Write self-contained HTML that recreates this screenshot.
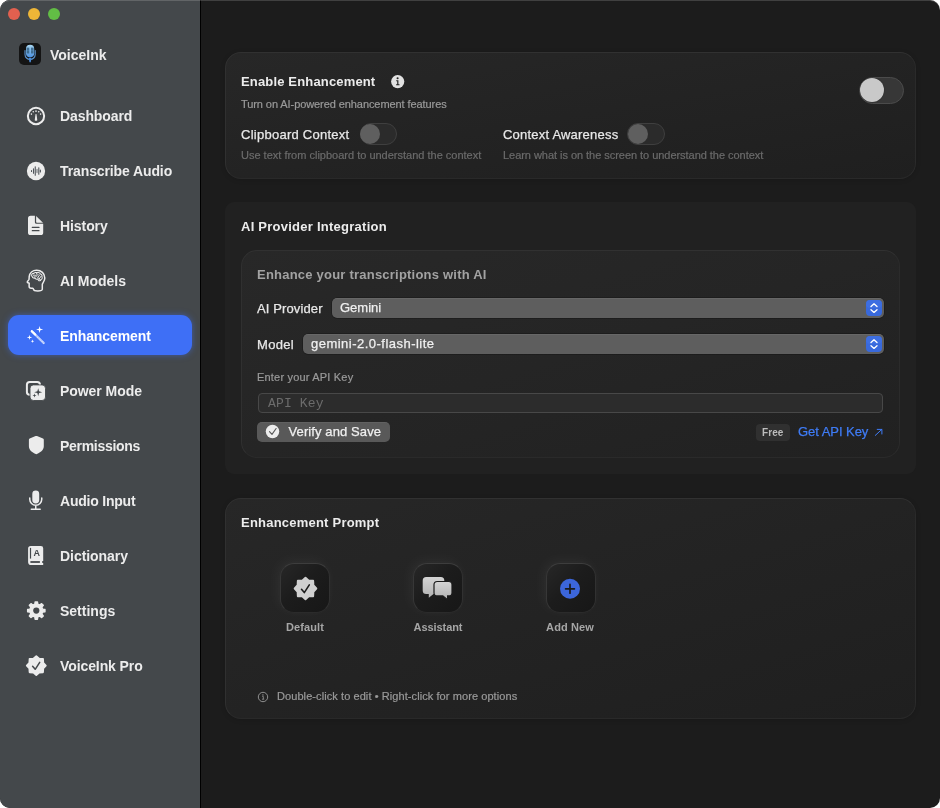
<!DOCTYPE html>
<html lang="en">
<head>
<meta charset="utf-8">
<title>VoiceInk</title>
<style>
*{box-sizing:border-box;margin:0;padding:0}
html,body{width:940px;height:808px;background:#fff;overflow:hidden}
body{font-family:"Liberation Sans",sans-serif;color:#e6e6e6;-webkit-font-smoothing:antialiased}
#win{will-change:transform;position:absolute;left:0;top:0;width:940px;height:808px;border-radius:10px;overflow:hidden;background:#1c1c1c}
#win:after{content:"";position:absolute;left:0;top:0;right:0;bottom:0;border-radius:10px;box-shadow:inset 0 1px 0 rgba(255,255,255,.16);pointer-events:none}
#side{position:absolute;left:0;top:0;width:200px;height:808px;background:#44484b}
#sep{position:absolute;left:200px;top:0;width:1px;height:808px;background:#000}
.tl{position:absolute;top:8px;width:12px;height:12px;border-radius:50%}
.abs{position:absolute;white-space:nowrap}
.nav{position:absolute;left:60px;font-weight:bold;font-size:14px;line-height:20px;color:#ececec;white-space:nowrap;letter-spacing:0}
.ico{position:absolute;left:24px;width:24px;height:24px}
#pill{position:absolute;left:8px;top:315px;width:184px;height:40px;border-radius:11px;background:#3e6ff6;box-shadow:0 0 6px rgba(62,111,246,.55)}
.card{position:absolute;left:225px;width:691px;background:linear-gradient(to bottom right,#272727 0%,#232323 50%,#1f1f1f 100%);border:1px solid;border-color:#313131 #2a2a2a #292929 #303030;border-radius:16px;box-shadow:0 1px 5px rgba(0,0,0,.14)}
.h{font-weight:bold;font-size:13px;color:#ececec;letter-spacing:-0.1px}
.sub{font-size:11px;color:#9a9a9a;-webkit-text-stroke:.2px}
.dim{font-size:11px;color:#6b6b6b;-webkit-text-stroke:.2px}
.lbl{font-size:13px;color:#e8e8e8;-webkit-text-stroke:.25px}
.tog{position:absolute;border-radius:20px;background:#3a3a3a;border:1px solid #4a4a4a}
.tog i{position:absolute;border-radius:50%}
.sel{position:absolute;height:20px;border-radius:5px;background:#5e5e5e;box-shadow:0 0 0 .5px rgba(0,0,0,.4),inset 0 .5px 0 rgba(255,255,255,.12)}
.sel span{position:absolute;left:8px;top:0;font-size:13px;line-height:19px;color:#f0f0f0;-webkit-text-stroke:.25px}
.sel svg{position:absolute;right:2px;top:2px}
.tile{position:absolute;top:563px;width:50px;height:50px;border-radius:14px;background:linear-gradient(135deg,#272727 0%,#1c1c1c 45%,#171717 100%);border:1px solid;border-color:#3d3d3d #313131 #2b2b2b #373737;box-shadow:-3px -3px 14px rgba(255,255,255,.045),0 0 8px rgba(255,255,255,.025)}
.tlab{position:absolute;top:621px;width:100px;text-align:center;font-size:11px;font-weight:bold;color:#a6a6a6;letter-spacing:.1px}
</style>
</head>
<body>
<div id="win">
  <div id="side"></div>
  <div id="sep"></div>
  <div class="tl" style="left:8px;background:#e2604f"></div>
  <div class="tl" style="left:28px;background:#eeb637"></div>
  <div class="tl" style="left:48px;background:#62bd45"></div>

  <!-- app logo -->
  <div class="abs" style="left:19px;top:43px;width:22px;height:22px;border-radius:5px;background:#141414"></div>
  <svg class="abs" style="left:19px;top:43px" width="22" height="22" viewBox="0 0 22 22">
    <defs><linearGradient id="mg" x1="0" y1="0" x2="0" y2="1"><stop offset="0" stop-color="#a9d6ef"/><stop offset=".45" stop-color="#79b3e6"/><stop offset="1" stop-color="#4f93e0"/></linearGradient></defs>
    <path d="M6 7.600V11.400A5.100 5.100 0 0 0 16.200 11.400V7.600" fill="none" stroke="#5a93cf" stroke-width="1.1" stroke-linecap="round"/>
    <rect x="7" y="1.800" width="8.200" height="12.500" rx="4.100" fill="url(#mg)"/>
    <rect x="7.700" y="4.700" width="2.500" height="5.700" fill="#2c5473" opacity=".85"/>
    <rect x="12" y="4.700" width="2.500" height="5.700" fill="#2c5473" opacity=".85"/>
    <path d="M7.700 6h2.500M7.700 7.500h2.500M7.700 9h2.500M12 6h2.500M12 7.500h2.500M12 9h2.500" stroke="#6fa8d6" stroke-width=".5" opacity=".7"/>
    <path d="M9.700 14.800h2.800l-.7 4.300q-.7.700-1.400 0z" fill="#4a8ad6"/>
  </svg>
  <div class="nav" style="left:50px;top:45px;letter-spacing:0px">VoiceInk</div>

  <div id="pill"></div>

  <div class="nav" style="top:106px;letter-spacing:-0.09px">Dashboard</div>
  <div class="nav" style="top:161px;letter-spacing:-0.11px">Transcribe Audio</div>
  <div class="nav" style="top:216px;letter-spacing:-0.08px">History</div>
  <div class="nav" style="top:271px;letter-spacing:-0.02px">AI Models</div>
  <div class="nav" style="top:326px;color:#fff;letter-spacing:-0.1px">Enhancement</div>
  <div class="nav" style="top:381px;letter-spacing:-0.06px">Power Mode</div>
  <div class="nav" style="top:436px;letter-spacing:-0.3px">Permissions</div>
  <div class="nav" style="top:491px;letter-spacing:-0.22px">Audio Input</div>
  <div class="nav" style="top:546px;letter-spacing:-0.05px">Dictionary</div>
  <div class="nav" style="top:601px;letter-spacing:0px">Settings</div>
  <div class="nav" style="top:656px;letter-spacing:-0.09px">VoiceInk Pro</div>


  <!-- Dashboard: gauge -->
  <svg class="ico" style="top:104px" viewBox="0 0 24 24"><g fill="#ececec">
    <circle cx="12" cy="12" r="8.15" fill="none" stroke="#ececec" stroke-width="2"/>
    <path d="M11.55 9.9h.9l.85 6.3q-1.3 1.2-2.6 0z"/>
    <circle cx="12" cy="7.1" r=".85"/><circle cx="14.7" cy="7.8" r=".8"/><circle cx="9.3" cy="7.8" r=".8"/>
    <circle cx="16.6" cy="10.1" r=".8"/><circle cx="7.4" cy="10.1" r=".8"/></g></svg>
  <!-- Transcribe: waveform circle -->
  <svg class="ico" style="top:159px" viewBox="0 0 24 24">
    <circle cx="12" cy="12" r="9.15" fill="#ececec"/>
    <g stroke="#50555a" stroke-width="1.1" stroke-linecap="round">
    <path d="M7.5 11.6v.8M9.5 9.7v4.6M11.25 7.8v8.4M14.8 8.8v6.4M16.4 11v2"/><path d="M13 10.5v3" stroke="#8b8f92" stroke-width="1.4"/></g></svg>
  <!-- History: doc.text.fill -->
  <svg class="ico" style="top:214px" viewBox="0 0 24 24"><g fill="#ececec">
    <path d="M6.6 1.7H10.9V8.2Q10.9 9.8 12.5 9.8H19.2V18.5Q19.2 21.1 16.6 21.1H6.6Q4 21.1 4 18.5V4.3Q4 1.7 6.6 1.7Z"/>
    <path d="M12.1 1.9L19 8.7H13Q12.1 8.7 12.1 7.8Z"/></g>
    <path d="M8.300 13.400h6.700M8.300 16.700h6.700" stroke="#44484b" stroke-width="1.200" stroke-linecap="round"/></svg>
  <!-- AI Models: brain head -->
  <svg class="ico" style="top:269px" viewBox="0 0 24 24"><g fill="none" stroke="#ececec" stroke-linecap="round" stroke-linejoin="round">
    <path stroke-width="1.5" d="M12.6 1.3C8.6 1.3 5.6 4 5.2 7.6C5.1 8.9 5.2 9.9 4.9 10.6L3.4 12.6C3.1 13.1 3.4 13.6 4 13.8L5.2 14.3L5.1 17.2C5.1 18.5 5.9 19.2 7.1 19.2H8.6C9.2 19.2 9.4 19.6 9.5 20.3C9.7 21.4 11.5 21.9 13.8 21.9C16.2 21.9 18.2 21.4 18.3 20.3V15.5C18.3 14 20.8 12.6 20.8 9C20.8 4.4 17.2 1.3 12.6 1.3Z"/>
    <path stroke-width="1.05" d="M7.6 6.6C7.4 5.2 8.6 4.3 9.8 4.4C10.4 3.4 12 3.1 13 3.8C14.3 3.2 15.9 3.7 16.4 4.9C17.7 5.2 18.4 6.5 17.9 7.7C18.6 8.7 18.2 10.2 17 10.5C16.7 11.7 15.3 12.1 14.4 11.3L13.9 9.9C12.6 10.4 11.3 10 10.8 9.1C9.5 9.3 8.4 8.7 8.4 7.7C7.9 7.5 7.6 7.1 7.6 6.6Z"/>
    <path stroke-width=".95" d="M12.7 3.6V5.2M9.4 6.2H11.6L12.6 7.4M13.6 8.9L15.6 5.9M15.2 9.9L17 7.3M10 8L11.5 7.9M14.1 5.4L12.9 6.6M16.1 10.6L14.6 9.4"/></g></svg>
  <!-- Enhancement: wand.and.stars -->
  <svg class="ico" style="top:324px" viewBox="0 0 24 24"><g fill="#fff">
    <path d="M15.60 1.90L16.36 4.74L19.20 5.50L16.36 6.26L15.60 9.10L14.84 6.26L12.00 5.50L14.84 4.74Z"/>
    <path d="M5.50 10.70L6.07 12.83L8.20 13.40L6.07 13.97L5.50 16.10L4.93 13.97L2.80 13.40L4.93 12.83Z"/>
    <path d="M8.50 15.50L8.93 16.77L10.20 17.20L8.93 17.63L8.50 18.90L8.07 17.63L6.80 17.20L8.07 16.77Z"/></g>
    <path d="M7.800 7.200L19.700 19.100" stroke="#fff" stroke-opacity=".78" stroke-width="2.1" stroke-linecap="round"/>
    <path d="M7.800 7.200L11.200 10.600" stroke="#fff" stroke-width="2.100" stroke-linecap="round"/>
    <path d="M11.900 11.300L19.300 18.700" stroke="#3e6ff6" stroke-opacity=".6" stroke-width=".8" stroke-dasharray=".9 .7"/></svg>
  <!-- Power Mode -->
  <svg class="ico" style="top:379px" viewBox="0 0 24 24">
    <rect x="2.900" y="2.900" width="13.100" height="12.900" rx="2.800" fill="none" stroke="#ececec" stroke-width="2"/>
    <rect x="6" y="5.900" width="15.500" height="15.600" rx="3.400" fill="#ececec" stroke="#44484b" stroke-width=".9"/>
    <g fill="#44484b"><path d="M14.20 9.20L15.05 12.35L18.20 13.20L15.05 14.05L14.20 17.20L13.35 14.05L10.20 13.20L13.35 12.35Z"/>
    <path d="M10.50 14.60L11.01 16.09L12.50 16.60L11.01 17.11L10.50 18.60L9.99 17.11L8.50 16.60L9.99 16.09Z"/></g></svg>
  <!-- Permissions: shield -->
  <svg class="ico" style="top:434px" viewBox="0 0 24 24">
    <path fill="#ececec" d="M11.6 2.1Q12.3 1.8 13 2.1L19 4.5Q19.8 4.8 19.8 5.7V12.3C19.8 16.3 15.8 18.8 12.9 20.1Q12.3 20.4 11.7 20.1C8.8 18.8 4.9 16.3 4.9 12.3V5.7Q4.9 4.8 5.7 4.5Z"/></svg>
  <!-- Audio Input: mic -->
  <svg class="ico" style="top:489px" viewBox="0 0 24 24">
    <rect x="8.3" y="1.5" width="6.9" height="12.9" rx="3.45" fill="#ececec"/>
    <path d="M5.75 9V10.2A6 6 0 0 0 17.75 10.2V9M11.75 16.2V20.2M7.3 20.2H16.2" fill="none" stroke="#ececec" stroke-width="1.5" stroke-linecap="round"/></svg>
  <!-- Dictionary: book -->
  <svg class="ico" style="top:544px" viewBox="0 0 24 24">
    <path fill="#ececec" d="M6.7 1.9H16.9Q19.2 1.9 19.2 4.2V16.9H18.4Q17.8 17.9 18.4 18.9H19.2V21.1H7.2Q4.1 21.1 4.1 18V4.5Q4.1 1.9 6.7 1.9Z"/>
    <path d="M6.500 3.900V14.600" stroke="#44484b" stroke-width="1.200"/>
    <path d="M6.400 17.100H15.900V18.900H6.400Z" fill="#44484b"/>
    <text x="12.850" y="12.200" text-anchor="middle" font-family="Liberation Sans, sans-serif" font-size="9" font-weight="bold" fill="#44484b">A</text></svg>
  <!-- Settings: gear -->
  <svg class="ico" style="top:599px" viewBox="0 0 24 24">
    <path fill="#ececec" stroke="#ececec" stroke-width="1.400" stroke-linejoin="round" d="M10.83 5.27L11.14 2.93L13.46 2.93L13.77 5.27L15.74 6.08L17.61 4.64L19.26 6.29L17.82 8.16L18.63 10.13L20.97 10.44L20.97 12.76L18.63 13.07L17.82 15.04L19.26 16.91L17.61 18.56L15.74 17.12L13.77 17.93L13.46 20.27L11.14 20.27L10.83 17.93L8.86 17.12L6.99 18.56L5.34 16.91L6.78 15.04L5.97 13.07L3.63 12.76L3.63 10.44L5.97 10.13L6.78 8.16L5.34 6.29L6.99 4.64L8.86 6.08Z"/>
    <circle cx="12.300" cy="11.600" r="3.100" fill="#44484b"/></svg>
  <!-- VoiceInk Pro: seal -->
  <svg class="ico" style="top:654px" viewBox="0 0 24 24">
    <path fill="#ececec" stroke="#ececec" stroke-width="1.800" stroke-linejoin="round" d="M12.30 2.10L15.17 4.67L19.02 4.88L19.23 8.73L21.80 11.60L19.23 14.47L19.02 18.32L15.17 18.53L12.30 21.10L9.43 18.53L5.58 18.32L5.37 14.47L2.80 11.60L5.37 8.73L5.58 4.88L9.43 4.67Z"/>
    <path d="M8.600 12.200L11.200 15.300L15.700 8.400" fill="none" stroke="#44484b" stroke-width="1.500" stroke-linecap="round" stroke-linejoin="round"/></svg>

  <!-- CARD 1 -->
  <div class="card" style="top:52px;height:127px"></div>
  <div class="abs h" style="left:241px;top:74px;letter-spacing:0.16px">Enable Enhancement</div>
  <div class="abs sub" style="left:241px;top:98px;letter-spacing:-0.08px">Turn on AI-powered enhancement features</div>
  <div class="abs lbl" style="left:241px;top:127px;letter-spacing:0.26px">Clipboard Context</div>
  <div class="abs dim" style="left:241px;top:149px;letter-spacing:0px">Use text from clipboard to understand the context</div>
  <div class="abs lbl" style="left:503px;top:127px;letter-spacing:0.21px">Context Awareness</div>
  <div class="abs dim" style="left:503px;top:149px;letter-spacing:-0.04px">Learn what is on the screen to understand the context</div>

  <svg class="abs" style="left:390px;top:74px" width="16" height="16" viewBox="0 0 16 16"><circle cx="7.700" cy="7.600" r="6.600" fill="#e2e2e2"/>
    <circle cx="7.600" cy="4.300" r="1.050" fill="#232323"/><path d="M6.200 6.300h2.200v4h1.100v1H6.100v-1h1.100V7.300H6.200z" fill="#232323"/></svg>
  <div class="tog" style="left:858.5px;top:76.5px;width:45.5px;height:27.5px;background:#373737;border-color:#4b4b4b"><i style="left:.3px;top:.8px;width:24px;height:24px;background:#c9c9c9;box-shadow:0 0 1px rgba(0,0,0,.5)"></i></div>
  <div class="tog" style="left:359.5px;top:123px;width:37.5px;height:22px;background:#2b2b2b;border-color:#3f3f3f"><i style="left:-.5px;top:0;width:20px;height:20px;background:#5f5f5f"></i></div>
  <div class="tog" style="left:627px;top:123px;width:37.5px;height:22px;background:#2b2b2b;border-color:#3f3f3f"><i style="left:-.5px;top:0;width:20px;height:20px;background:#5f5f5f"></i></div>

  <!-- CARD 2 -->
  <div class="card" style="top:202px;height:272px;border:none;border-radius:9px;box-shadow:none;background:#212121"></div>
  <div class="abs h" style="left:241px;top:219px;letter-spacing:0.25px">AI Provider Integration</div>
  <div class="card" style="left:241px;top:250px;width:659px;height:208px;background:linear-gradient(to bottom right,#282828 0%,#252525 50%,#212121 100%);border-color:#313131 #2b2b2b #2a2a2a #303030;box-shadow:none"></div>
  <div class="abs h" style="left:257px;top:267px;color:#a2a2a2;letter-spacing:0.22px">Enhance your transcriptions with AI</div>
  <div class="abs lbl" style="left:257px;top:301px;letter-spacing:0.12px">AI Provider</div>
  <div class="abs lbl" style="left:257px;top:337px;letter-spacing:0.3px">Model</div>
  <div class="abs sub" style="left:257px;top:371px;letter-spacing:0.19px">Enter your API Key</div>

  <div class="sel" style="left:332px;top:298px;width:552px"><span>Gemini</span><svg width="16" height="16" viewBox="0 0 16 16"><rect width="16" height="16" rx="4" fill="#3869dc"/><rect width="16" height="8" rx="4" fill="#4172e4" opacity=".6"/><path d="M5 6.500L8 3.800l3 2.700M5 9.700L8 12.400l3-2.700" fill="none" stroke="#fff" stroke-width="1.350" stroke-linecap="round" stroke-linejoin="round"/></svg></div>
  <div class="sel" style="left:303px;top:334px;width:581px"><span style="letter-spacing:.48px">gemini-2.0-flash-lite</span><svg width="16" height="16" viewBox="0 0 16 16"><rect width="16" height="16" rx="4" fill="#3869dc"/><rect width="16" height="8" rx="4" fill="#4172e4" opacity=".6"/><path d="M5 6.500L8 3.800l3 2.700M5 9.700L8 12.400l3-2.700" fill="none" stroke="#fff" stroke-width="1.350" stroke-linecap="round" stroke-linejoin="round"/></svg></div>
  <div class="abs" style="left:258px;top:393px;width:625px;height:20px;border-radius:4px;background:#2c2c2c;border:1px solid #484848"></div>
  <div class="abs" style="left:268px;top:396px;font-family:'Liberation Mono',monospace;font-size:13px;line-height:16px;color:#6c6c6c;letter-spacing:0.15px">API Key</div>
  <div class="abs" style="left:257px;top:422px;width:133px;height:20px;border-radius:5px;background:#595959;box-shadow:inset 0 .5px 0 rgba(255,255,255,.1)"></div>
  <svg class="abs" style="left:265px;top:424px" width="15" height="15" viewBox="0 0 15 15"><circle cx="7.500" cy="7.400" r="6.750" fill="#ececec"/><path d="M4.500 7.700l2.500 2.600 4.100-5.800" fill="none" stroke="#595959" stroke-width="1.150" stroke-linecap="round" stroke-linejoin="round"/></svg>
  <div class="abs lbl" style="left:288.5px;top:424px;color:#f0f0f0;letter-spacing:0.1px">Verify and Save</div>
  <div class="abs" style="left:756px;top:424px;width:34px;height:17px;border-radius:4px;background:#303030"></div>
  <div class="abs" style="left:762px;top:427px;font-size:10px;font-weight:bold;color:#bcbcbc;letter-spacing:.1px">Free</div>
  <div class="abs lbl" style="left:798px;top:424px;color:#3f7cf6;letter-spacing:-0.05px">Get API Key</div>
  <svg class="abs" style="left:873px;top:426px" width="11" height="11" viewBox="0 0 11 11"><path d="M2.300 9.400L8.800 3.400M4.200 3.400H8.900V8" fill="none" stroke="#3f7cf6" stroke-width="1" stroke-linecap="round" stroke-linejoin="round"/></svg>

  <!-- CARD 3 -->
  <div class="card" style="top:498px;height:221px"></div>
  <div class="abs h" style="left:241px;top:515px;letter-spacing:0.22px">Enhancement Prompt</div>
  <div class="abs sub" style="left:277px;top:690px;letter-spacing:0.08px">Double-click to edit • Right-click for more options</div>
  <div class="tile" style="left:280px"></div>
  <div class="tile" style="left:413px"></div>
  <div class="tile" style="left:546px"></div>
  <svg class="abs" style="left:293px;top:576px" width="25" height="25" viewBox="-12.5 -12.5 25 25">
    <path fill="#d0d0d0" stroke="#d0d0d0" stroke-width="2" stroke-linejoin="round" d="M0.00 -10.80L3.25 -7.85L7.64 -7.64L7.85 -3.25L10.80 0.00L7.85 3.25L7.64 7.64L3.25 7.85L0.00 10.80L-3.25 7.85L-7.64 7.64L-7.85 3.25L-10.80 0.00L-7.85 -3.25L-7.64 -7.64L-3.25 -7.85Z"/>
    <path d="M-4 .8L-1.2 4.1L3.8 -3.6" fill="none" stroke="#1c1c1c" stroke-width="1.6" stroke-linecap="round" stroke-linejoin="round"/></svg>
  <svg class="abs" style="left:413px;top:563px" width="50" height="50" viewBox="0 0 50 50"><defs><linearGradient id="bg1" x1="0" y1="0" x2="0" y2="1"><stop offset="0" stop-color="#d4d4d4"/><stop offset="1" stop-color="#b2b2b2"/></linearGradient></defs>
    <path fill="url(#bg1)" d="M13.2 14h14.6q3.5 0 3.5 3.5v10q0 3.5-3.500 3.500H20.500L15.800 34.800V31H13.200Q9.700 31 9.700 27.500V17.500Q9.700 14 13.200 14Z"/>
    <path fill="url(#bg1)" stroke="#1c1c1c" stroke-width="1.200" d="M24.200 18.500H35.800q3.200 0 3.200 3.200v8q0 3.200-3.200 3.200H34.600V36.700L29.800 32.900H24.200q-3.200 0-3.200-3.200v-8q0-3.200 3.200-3.200Z"/></svg>
  <svg class="abs" style="left:559px;top:578px" width="22" height="22" viewBox="0 0 22 22"><circle cx="11" cy="10.8" r="10" fill="#3c66db"/><path d="M6.600 10.800h8.800M11 6.400v8.800" stroke="#1a1a1a" stroke-width="1.7" stroke-linecap="round"/></svg>
  <div class="tlab" style="left:255px;letter-spacing:0.1px;top:621px">Default</div>
  <div class="tlab" style="left:388px;letter-spacing:-0.07px;top:621px">Assistant</div>
  <div class="tlab" style="left:520px;letter-spacing:0.1px;top:621px">Add New</div>
  <svg class="abs" style="left:256px;top:690px" width="14" height="14" viewBox="0 0 14 14"><circle cx="7" cy="7" r="4.700" fill="none" stroke="#9a9a9a" stroke-width=".9"/><circle cx="6.900" cy="4.900" r=".7" fill="#9a9a9a"/><path d="M6.200 6.400h1.100v2.700M6 9.200h2.200" fill="none" stroke="#9a9a9a" stroke-width=".8"/></svg>
</div>
</body>
</html>
